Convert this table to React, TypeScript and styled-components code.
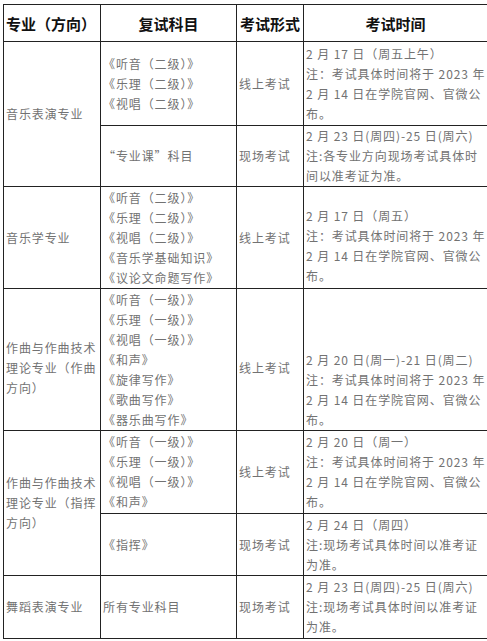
import React from "react";
import styled, { createGlobalStyle } from "styled-components";

const GlobalStyle = createGlobalStyle`
  html, body {
    margin: 0;
    padding: 0;
    background: #ffffff;
  }
  body {
    font-family: "Noto Sans CJK SC", "Liberation Serif", serif;
  }
`;

const Page = styled.div`
  padding: 4px 0 0 3px;
`;

const Table = styled.table`
  border-collapse: collapse;
  table-layout: fixed;
  width: 484px;
`;

const Row = styled.tr<{ $h: number }>`
  height: ${(p) => p.$h}px;
`;

const HeadCell = styled.th<{ $left?: boolean }>`
  border: 1px solid #222;
  padding: 0 2px;
  font-size: 15px;
  font-weight: 700;
  color: #111;
  text-align: ${(p) => (p.$left ? "left" : "center")};
  vertical-align: middle;
  white-space: nowrap;
`;

const Cell = styled.td<{ $shift?: number }>`
  border: 1px solid #222;
  padding: ${(p) => p.$shift ?? 0}px 2px 0 2px;
  font-size: 12px;
  line-height: 20px;
  letter-spacing: 0.9px;
  color: #727272;
  text-align: left;
  vertical-align: middle;
  white-space: nowrap;
  overflow: hidden;
`;

const Line = styled.div`
  display: block;
`;

type Part = {
  subjects: string[];
  form: string;
  time: string[];
  h: number;
  formShift?: number;
  timeShift?: number;
};

type Group = {
  major: string[];
  majorShift?: number;
  parts: Part[];
};

const notice = ["注：考试具体时间将于 2023 年", "2 月 14 日在学院官网、官微公", "布。"];
const onSite = ["注:现场考试具体时间以准考证", "为准。"];

const groups: Group[] = [
  {
    major: ["音乐表演专业"],
    parts: [
      {
        subjects: ["《听音（二级）》", "《乐理（二级）》", "《视唱（二级）》"],
        form: "线上考试",
        time: ["2 月 17 日（周五上午）", ...notice],
        h: 84,
      },
      {
        subjects: ["“专业课”科目"],
        form: "现场考试",
        time: ["2 月 23 日(周四)-25 日(周六)", "注:各专业方向现场考试具体时", "间以准考证为准。"],
        h: 61,
      },
    ],
  },
  {
    major: ["音乐学专业"],
    parts: [
      {
        subjects: [
          "《听音（二级）》",
          "《乐理（二级）》",
          "《视唱（二级）》",
          "《音乐学基础知识》",
          "《议论文命题写作》",
        ],
        form: "线上考试",
        time: ["2 月 17 日（周五）", ...notice],
        h: 102,
        timeShift: 16,
      },
    ],
  },
  {
    major: ["作曲与作曲技术", "理论专业（作曲", "方向）"],
    majorShift: 16,
    parts: [
      {
        subjects: [
          "《听音（一级）》",
          "《乐理（一级）》",
          "《视唱（一级）》",
          "《和声》",
          "《旋律写作》",
          "《歌曲写作》",
          "《器乐曲写作》",
        ],
        form: "线上考试",
        time: ["2 月 20 日(周一)-21 日(周二)", ...notice],
        h: 142,
        formShift: 16,
        timeShift: 60,
      },
    ],
  },
  {
    major: ["作曲与作曲技术", "理论专业（指挥", "方向）"],
    parts: [
      {
        subjects: ["《听音（一级）》", "《乐理（一级）》", "《视唱（一级）》", "《和声》"],
        form: "线上考试",
        time: ["2 月 20 日（周一）", ...notice],
        h: 83,
      },
      {
        subjects: ["《指挥》"],
        form: "现场考试",
        time: ["2 月 24 日（周四）", ...onSite],
        h: 62,
      },
    ],
  },
  {
    major: ["舞蹈表演专业"],
    parts: [
      {
        subjects: ["所有专业科目"],
        form: "现场考试",
        time: ["2 月 23 日(周四)-25 日(周六)", ...onSite],
        h: 63,
      },
    ],
  },
];

const Lines = ({ items }: { items: string[] }) => (
  <>
    {items.map((t, i) => (
      <Line key={i}>{t}</Line>
    ))}
  </>
);

export default function App() {
  return (
    <>
      <GlobalStyle />
      <Page>
        <Table>
          <colgroup>
            <col style={{ width: 97 }} />
            <col style={{ width: 136 }} />
            <col style={{ width: 67 }} />
            <col style={{ width: 184 }} />
          </colgroup>
          <thead>
            <Row $h={37}>
              <HeadCell $left>专业（方向）</HeadCell>
              <HeadCell>复试科目</HeadCell>
              <HeadCell>考试形式</HeadCell>
              <HeadCell>考试时间</HeadCell>
            </Row>
          </thead>
          <tbody>
            {groups.map((g, gi) =>
              g.parts.map((p, pi) => (
                <Row key={`${gi}-${pi}`} $h={p.h}>
                  {pi === 0 && (
                    <Cell rowSpan={g.parts.length} $shift={g.majorShift}>
                      <Lines items={g.major} />
                    </Cell>
                  )}
                  <Cell>
                    <Lines items={p.subjects} />
                  </Cell>
                  <Cell $shift={p.formShift}>{p.form}</Cell>
                  <Cell $shift={p.timeShift}>
                    <Lines items={p.time} />
                  </Cell>
                </Row>
              ))
            )}
          </tbody>
        </Table>
      </Page>
    </>
  );
}
